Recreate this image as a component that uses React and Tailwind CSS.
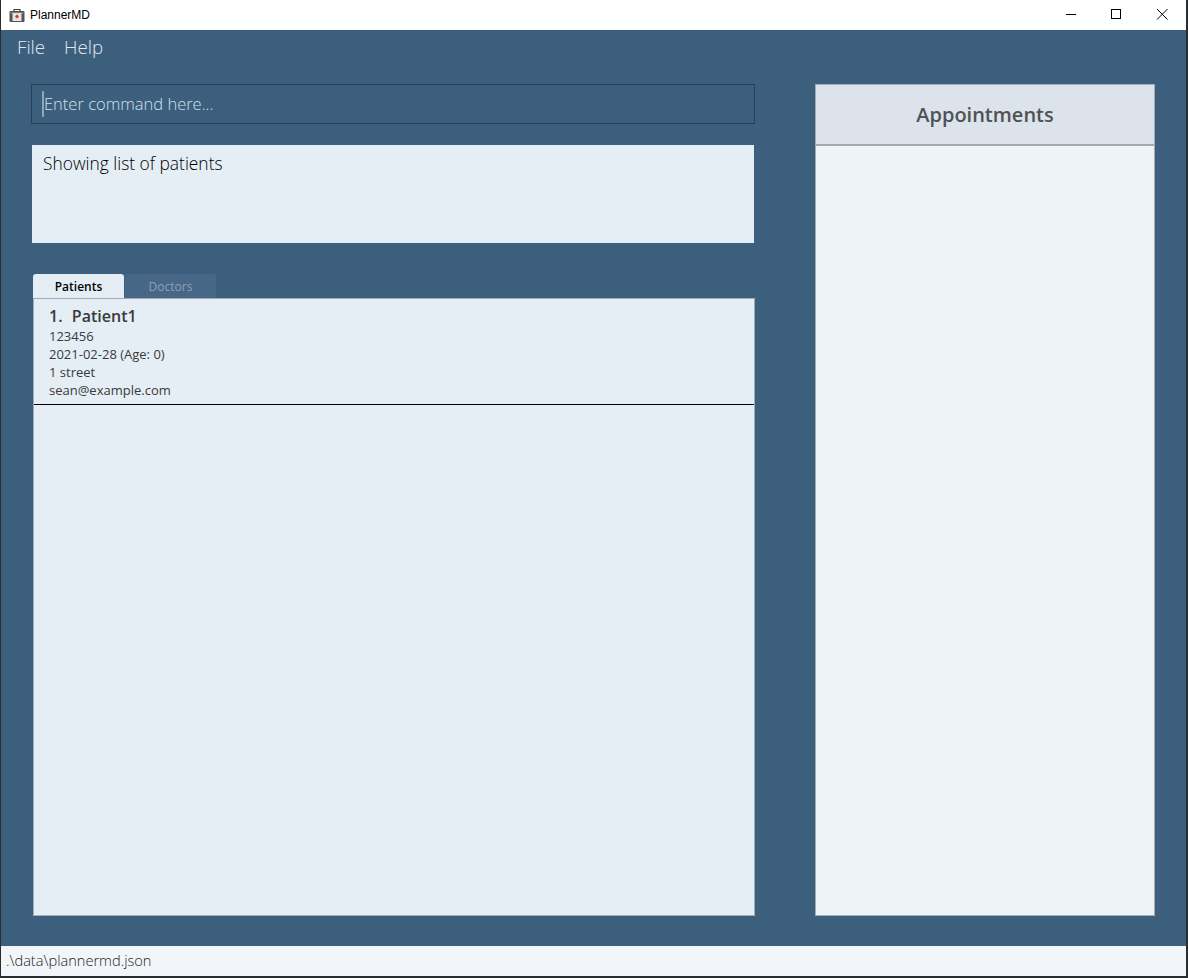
import React from 'react';

const patient = {
  name: 'Patient1',
  phone: '123456',
  dob: '2021-02-28 (Age: 0)',
  address: '1 street',
  email: 'sean@example.com',
};

const AppIcon = () => (
  <svg width="16" height="15" viewBox="0 0 16 15">
    <path d="M5 3.5V1.5h6V3.5" fill="none" stroke="#444" strokeWidth="1.2" />
    <rect x="0.5" y="3" width="15" height="11" rx="1" fill="#555" />
    <rect x="1.5" y="4" width="13" height="2" fill="#777" />
    <rect x="3.5" y="5" width="9" height="8" fill="#e8e4de" />
    <path d="M8 6.8v3.4M6.3 8.5h3.4" stroke="#c0392b" strokeWidth="1.6" />
  </svg>
);

const WindowControls = () => (
  <div className="flex items-center h-full text-black">
    <svg width="46" height="30" viewBox="0 0 46 30"><path d="M18 14.5h10" stroke="#000" strokeWidth="1" /></svg>
    <svg width="46" height="30" viewBox="0 0 46 30"><rect x="17.5" y="9.5" width="9" height="9" fill="none" stroke="#000" strokeWidth="1" /></svg>
    <svg width="46" height="30" viewBox="0 0 46 30"><path d="M17 9l10.5 10.5M27.5 9L17 19.5" stroke="#000" strokeWidth="1" /></svg>
  </div>
);

export default function App() {
  return (
    <div className="w-[1188px] h-[978px] bg-[#2a2d30] overflow-hidden font-['Open_Sans',sans-serif]">
      <div className="w-[1185px] h-[976px] ml-px flex flex-col bg-[#3c5f7e]">
        {/* title bar */}
        <div className="h-[30px] shrink-0 bg-white flex items-center justify-between">
          <div className="flex items-center pl-[8px] gap-[5px] text-[12px] text-black font-['Liberation_Sans',sans-serif]">
            <AppIcon />
            <span>PlannerMD</span>
          </div>
          <WindowControls />
        </div>

        {/* menu */}
        <div className="h-[35px] shrink-0 flex items-center pl-[16px] gap-[19px] text-[18.7px] font-light text-[#e1e7ec]">
          <span>File</span>
          <span>Help</span>
        </div>

        <div className="flex-1 flex pt-[19px] pl-[30px] pb-[30px] gap-[60px]">
          {/* left column */}
          <div className="w-[724px] flex flex-col">
            <div className="h-[40px] shrink-0 border border-[#2c3e4f] flex items-center pl-[10px]">
              <div className="w-[2px] h-[26px] bg-[#8fa5b9]" />
              <span className="text-[16.5px] font-light text-[#d3e0ea]">Enter command here...</span>
            </div>
            <div className="h-[98px] shrink-0 w-[722px] ml-px mt-[21px] bg-[#e5edf5] px-[11px] py-[6px] text-[17.4px] leading-[24px] text-black font-light">
              Showing list of patients
            </div>

            <div className="mt-[31px] h-[24px] shrink-0 flex pl-[2px] gap-px">
              <div className="w-[91px] rounded-t-[3px] bg-[#e5edf5] flex items-center justify-center pt-px text-[12px] font-semibold text-black">
                Patients
              </div>
              <div className="w-[91px] rounded-t-[3px] bg-[#466787] flex items-center justify-center pt-px text-[12px] font-normal text-[#8ba0b4]">
                Doctors
              </div>
            </div>

            <div className="flex-1 ml-[2px] w-[722px] border border-[#a5abb2] bg-[#e5edf5]">
              <div className="h-[106px] border-b border-black pl-[15px] pt-[6px] text-[#3a3a3a] text-[13px] leading-[18px]">
                <div className="text-[16px] font-semibold leading-[22px] whitespace-pre">
                  1.  <span className="ml-px">{patient.name}</span>
                </div>
                <div>{patient.phone}</div>
                <div>{patient.dob}</div>
                <div>{patient.address}</div>
                <div>{patient.email}</div>
              </div>
            </div>
          </div>

          {/* appointments */}
          <div className="w-[340px] flex flex-col border border-[#a5abb2] bg-[#eef3f7]">
            <div className="h-[61px] shrink-0 bg-[#dce3eb] border-b-2 border-[#a2a9af] flex items-center justify-center text-[20px] font-semibold text-[#4f5256]">
              Appointments
            </div>
          </div>
        </div>

        {/* status bar */}
        <div className="h-[30px] shrink-0 bg-[#f2f6fb] flex items-center pl-[5px] text-[14.6px] font-light text-[#222]">
          .\data\plannermd.json
        </div>
      </div>
    </div>
  );
}
